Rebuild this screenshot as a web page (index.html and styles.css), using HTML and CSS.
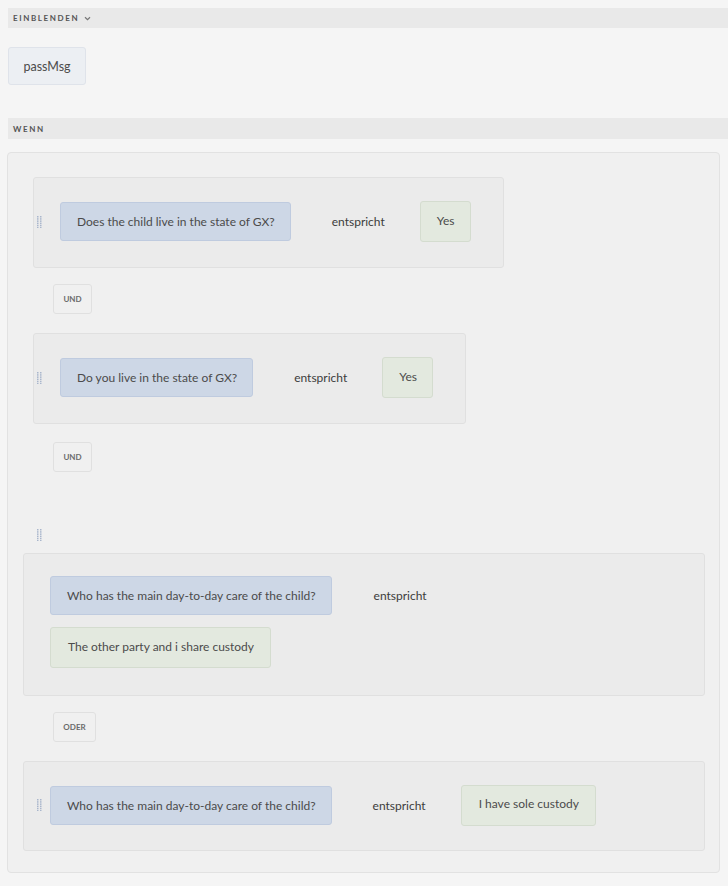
FILE: index.html
```html
<!DOCTYPE html>
<html lang="de">
<head>
<meta charset="utf-8">
<link rel="stylesheet" href="styles.css">
</head>
<body>
<div class="page">
  <div class="bar">EINBLENDEN <span class="chev"><svg width="7" height="5" viewBox="0 0 7 5"><path d="M1 1.2 L3.5 3.6 L6 1.2" fill="none" stroke="#777" stroke-width="1.2"/></svg></span></div>
  <div class="show-row"><div class="chip chip-target">passMsg</div></div>
  <div class="bar bar-wenn">WENN</div>
  <div class="container">
    <div class="cond cond-1">
      <span class="handle"><svg width="5" height="12" viewBox="0 0 5 12"><g fill="#a9b6cc"><rect x="0" y="0" width="1.5" height="1.5"/><rect x="3" y="0" width="1.5" height="1.5"/><rect x="0" y="2.2" width="1.5" height="1.5"/><rect x="3" y="2.2" width="1.5" height="1.5"/><rect x="0" y="4.4" width="1.5" height="1.5"/><rect x="3" y="4.4" width="1.5" height="1.5"/><rect x="0" y="6.6" width="1.5" height="1.5"/><rect x="3" y="6.6" width="1.5" height="1.5"/><rect x="0" y="8.8" width="1.5" height="1.5"/><rect x="3" y="8.8" width="1.5" height="1.5"/><rect x="0" y="11" width="1.5" height="1"/><rect x="3" y="11" width="1.5" height="1"/></g></svg></span>
      <div class="chip chip-q">Does the child live in the state of GX?</div>
      <span class="op">entspricht</span>
      <div class="chip chip-v">Yes</div>
    </div>
    <div class="conj conj-1">UND</div>
    <div class="cond cond-2">
      <span class="handle"><svg width="5" height="12" viewBox="0 0 5 12"><g fill="#a9b6cc"><rect x="0" y="0" width="1.5" height="1.5"/><rect x="3" y="0" width="1.5" height="1.5"/><rect x="0" y="2.2" width="1.5" height="1.5"/><rect x="3" y="2.2" width="1.5" height="1.5"/><rect x="0" y="4.4" width="1.5" height="1.5"/><rect x="3" y="4.4" width="1.5" height="1.5"/><rect x="0" y="6.6" width="1.5" height="1.5"/><rect x="3" y="6.6" width="1.5" height="1.5"/><rect x="0" y="8.8" width="1.5" height="1.5"/><rect x="3" y="8.8" width="1.5" height="1.5"/><rect x="0" y="11" width="1.5" height="1"/><rect x="3" y="11" width="1.5" height="1"/></g></svg></span>
      <div class="chip chip-q">Do you live in the state of GX?</div>
      <span class="op">entspricht</span>
      <div class="chip chip-v">Yes</div>
    </div>
    <div class="conj conj-2">UND</div>
    <div class="group">
      <span class="handle handle-group"><svg width="5" height="12" viewBox="0 0 5 12"><g fill="#a9b6cc"><rect x="0" y="0" width="1.5" height="1.5"/><rect x="3" y="0" width="1.5" height="1.5"/><rect x="0" y="2.2" width="1.5" height="1.5"/><rect x="3" y="2.2" width="1.5" height="1.5"/><rect x="0" y="4.4" width="1.5" height="1.5"/><rect x="3" y="4.4" width="1.5" height="1.5"/><rect x="0" y="6.6" width="1.5" height="1.5"/><rect x="3" y="6.6" width="1.5" height="1.5"/><rect x="0" y="8.8" width="1.5" height="1.5"/><rect x="3" y="8.8" width="1.5" height="1.5"/><rect x="0" y="11" width="1.5" height="1"/><rect x="3" y="11" width="1.5" height="1"/></g></svg></span>
      <div class="gcond gcond-wrap">
        <div class="wrap-line">
          <div class="chip chip-q">Who has the main day-to-day care of the child?</div>
          <span class="op">entspricht</span>
        </div>
        <div class="chip chip-v chip-share">The other party and i share custody</div>
      </div>
      <div class="conj conj-or">ODER</div>
      <div class="gcond gcond-row">
        <span class="handle handle-inner"><svg width="5" height="12" viewBox="0 0 5 12"><g fill="#a9b6cc"><rect x="0" y="0" width="1.5" height="1.5"/><rect x="3" y="0" width="1.5" height="1.5"/><rect x="0" y="2.2" width="1.5" height="1.5"/><rect x="3" y="2.2" width="1.5" height="1.5"/><rect x="0" y="4.4" width="1.5" height="1.5"/><rect x="3" y="4.4" width="1.5" height="1.5"/><rect x="0" y="6.6" width="1.5" height="1.5"/><rect x="3" y="6.6" width="1.5" height="1.5"/><rect x="0" y="8.8" width="1.5" height="1.5"/><rect x="3" y="8.8" width="1.5" height="1.5"/><rect x="0" y="11" width="1.5" height="1"/><rect x="3" y="11" width="1.5" height="1"/></g></svg></span>
        <div class="chip chip-q">Who has the main day-to-day care of the child?</div>
        <span class="op">entspricht</span>
        <div class="chip chip-v chip-sole">I have sole custody</div>
      </div>
    </div>
  </div>
</div>
</body>
</html>
```

FILE: styles.css
```css
* { box-sizing: border-box; }
html, body { margin: 0; padding: 0; }
body {
  background: #f5f5f5;
  font-family: Lato, "Open Sans", sans-serif;
  color: #4b4b4b;
  width: 728px;
  height: 886px;
  overflow: hidden;
}
.page {
  padding-top: 8px;
  padding-left: 7px;
}
.bar {
  margin-left: 1px;
  height: 20px;
  background: #e9e9e9;
  font-size: 8px;
  font-weight: 700;
  letter-spacing: 1.6px;
  color: #555;
  padding-left: 5px;
  display: flex;
  align-items: center;
  gap: 3px;
}
.chev { display: inline-flex; margin-left: 2px; }
.bar-wenn { height: 21px; }
.show-row {
  padding: 19px 0 33px 1px;
}
.chip {
  display: inline-flex;
  align-items: center;
  height: 39px;
  padding: 0 15px 0 16px;
  font-size: 12px;
  border-radius: 3px;
  white-space: nowrap;
}
.chip-target {
  width: 78px;
  height: 38px;
  justify-content: center;
  padding: 0;
  background: #eceff3;
  border: 1px solid #dfe3ea;
  font-size: 12.5px;
}
.chip-q {
  background: #cdd7e6;
  border: 1px solid #bfcbdf;
}
.chip-v {
  background: #e3e9df;
  border: 1px solid #d4dccf;
  height: 41px;
  padding-bottom: 3px;
}
.container {
  margin-top: 13px;
  width: 713px;
  height: 721px;
  background: #f0f0f0;
  border: 1px solid #e2e2e2;
  border-radius: 4px;
  padding: 24px 14px 0 15px;
}
.cond {
  display: inline-flex;
  align-items: center;
  margin-left: 10px;
  height: 91px;
  background: #ebebeb;
  border: 1px solid #e0e0e0;
  border-radius: 3px;
  padding: 0 32px 2px 3px;
}
.handle {
  display: inline-flex;
  width: 5px;
  margin-right: 18px;
}
.op {
  font-size: 12px;
  color: #3c3c3c;
  margin: 0 35px 0 41px;
}
.conj {
  display: flex;
  align-items: center;
  justify-content: center;
  width: 39px;
  height: 30px;
  margin-left: 30px;
  background: #f0f0f0;
  border: 1px solid #e0e0e0;
  border-radius: 3px;
  font-size: 8px;
  font-weight: 700;
  color: #6b6b6b;
}
.conj-1 { margin-top: 16px; margin-bottom: 19px; }
.conj-2 { margin-top: 18px; }
.group {
  display: flex;
  flex-direction: column;
}
.handle-group {
  margin: 57px 0 12px 14px;
  height: 12px;
}
.gcond {
  width: 682px;
  background: #ebebeb;
  border: 1px solid #e0e0e0;
  border-radius: 3px;
}
.gcond-wrap {
  height: 143px;
  padding: 22px 0 0 26px;
  display: flex;
  flex-direction: column;
  align-items: flex-start;
  gap: 12px;
}
.wrap-line { display: flex; align-items: center; }
.wrap-line .op { margin-left: 42px; }
.conj-or {
  width: 43px;
  margin: 16px 0 19px 30px;
}
.gcond-row {
  height: 90px;
  display: flex;
  align-items: center;
  padding: 0 0 2px 13px;
}
.handle-inner { margin-right: 8px; }
.chip-share, .chip-sole { padding: 0 16px 3px 17px; }
.gcond-row .op { margin-right: 35px; }
```
